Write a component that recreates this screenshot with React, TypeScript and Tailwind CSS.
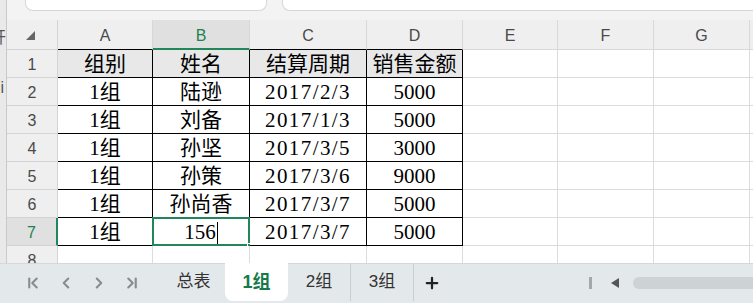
import { ChevronFirst, ChevronLast, ChevronLeft, ChevronRight, Plus } from "lucide-react";
import clsx from "clsx";

const cols = [
  { k: "A", w: "w-[95px]" },
  { k: "B", w: "w-[97px]" },
  { k: "C", w: "w-[117px]" },
  { k: "D", w: "w-[96px]" },
  { k: "E", w: "w-[95px]" },
  { k: "F", w: "w-[96px]" },
  { k: "G", w: "w-[96px]" },
  { k: "H", w: "w-[100px]" },
];

const rows = [
  ["组别", "姓名", "结算周期", "销售金额"],
  ["1组", "陆逊", "2017/2/3", "5000"],
  ["1组", "刘备", "2017/1/3", "5000"],
  ["1组", "孙坚", "2017/3/5", "3000"],
  ["1组", "孙策", "2017/3/6", "9000"],
  ["1组", "孙尚香", "2017/3/7", "5000"],
  ["1组", "156", "2017/3/7", "5000"],
];

const sheets = ["总表", "1组", "2组", "3组"];

const serif = "font-['Liberation_Serif','Noto_Sans_CJK_SC',serif]";
const sans = "font-['Liberation_Sans','Noto_Sans_CJK_SC',sans-serif]";

function HeaderRow() {
  return (
    <div className="flex h-[30px] shrink-0">
      <div className="flex w-[51px] shrink-0 items-center justify-center border-r border-b border-[#d4d4d4] bg-[#efefef]">
        <svg width="9" height="9" viewBox="0 0 9 9" className="mt-[2px] ml-[-4px]">
          <polygon points="9,0 9,9 0,9" fill="#666" />
        </svg>
      </div>
      {cols.map((c, i) => (
        <div
          key={c.k}
          className={clsx(
            "flex shrink-0 items-center justify-center border-r border-[#d8d8d8] pt-[3px] text-[16px]",
            c.w,
            i === 1
              ? "border-b-2 border-b-[#21875a] bg-[#e0e0e0] text-[#1d8152]"
              : "border-b bg-[#efefef] text-[#4a4a4a]",
            i < 4 && i !== 1 && "border-b-black"
          )}
        >
          {c.k}
        </div>
      ))}
    </div>
  );
}

function DataRow({ n, cells }: { n: number; cells: string[] }) {
  const sel = n === 7;
  return (
    <div className="flex h-[28px] shrink-0">
      <div
        className={clsx(
          "flex w-[51px] shrink-0 items-center justify-center border-b border-[#d4d4d4] pt-[2px] text-[16px]",
          sel ? "border-r-2 border-r-[#21875a] bg-[#e0e0e0] text-[#1d8152]" : "border-r bg-[#efefef] text-[#4a4a4a]"
        )}
      >
        {n}
      </div>
      {cols.map((c, i) => {
        const inTable = i < 4 && cells.length > 0;
        return (
          <div
            key={c.k}
            className={clsx(
              "relative flex shrink-0 items-center justify-center border-r border-b pt-[2px] text-[21px] leading-none text-black",
              serif,
              c.w,
              inTable ? "border-black" : "border-[#dcdcdc]",
              inTable && n === 1 ? "bg-[#e8e8e8]" : "bg-white",
              i === 2 && n > 1 && "tracking-[1.4px]"
            )}
          >
            {inTable ? cells[i] : ""}
            {sel && i === 1 && (
              <>
                <span className="ml-[1px] h-[22px] w-[1px] bg-black" />
                <div className="absolute top-[-1px] left-[-1px] right-[-1px] bottom-[-1px] border-2 border-[#21875a]" />
                <div className="absolute right-[-3px] bottom-[-3px] h-[5px] w-[5px] border border-white bg-[#21875a]" />
              </>
            )}
          </div>
        );
      })}
    </div>
  );
}

export default function App() {
  return (
    <div className={clsx("flex h-[303px] w-[753px] flex-col overflow-hidden bg-[#f3f3f3]", sans)}>
      <div className="flex min-h-0 flex-1">
        {/* clipped neighbour panel */}
        <div className="flex w-[7px] shrink-0 flex-col overflow-hidden border-r border-[#c9c9c9] bg-[#e9e9e9] text-[16px] text-[#555]">
          <div className="mt-[26px] flex justify-end whitespace-nowrap">开</div>
          <div className="mt-[26px] flex justify-end pr-[2px] whitespace-nowrap">i</div>
        </div>

        <div className="flex min-w-0 flex-1 flex-col">
          <div className="flex h-[20px] shrink-0 gap-[15px] pl-[18px]">
            <div className="h-[11px] w-[242px] rounded-b-[8px] border border-t-0 border-[#d6d6d6] bg-white" />
            <div className="h-[11px] flex-1 rounded-bl-[8px] border-b border-l border-[#d6d6d6] bg-white" />
          </div>

          <div className="flex min-h-0 flex-1 flex-col overflow-hidden">
            <HeaderRow />
            {rows.map((r, i) => (
              <DataRow key={i} n={i + 1} cells={r} />
            ))}
            <DataRow n={8} cells={[]} />
          </div>
        </div>
      </div>

      {/* sheet tabs */}
      <div className="flex h-[40px] shrink-0 items-start border-t border-[#d3d9db] bg-[#e3e9eb]">
        <div className="flex h-[38px] w-[162px] shrink-0 items-center gap-[15px] pl-[24px] text-[#868c90]">
          <ChevronFirst size={18} strokeWidth={2.8} />
          <ChevronLeft size={18} strokeWidth={2.8} />
          <ChevronRight size={18} strokeWidth={2.8} />
          <ChevronLast size={18} strokeWidth={2.8} />
        </div>
        {sheets.map((s, i) => (
          <div
            key={s}
            className={clsx(
              "mt-[-1px] flex h-[38px] w-[63px] shrink-0 items-center justify-center text-[17px]",
              i === 1 ? "rounded-b-[8px] bg-white text-[18px] font-bold text-[#177a4b]" : "text-[#333]",
              (i === 2 || i === 3) && "border-r border-[#c9cfd1]"
            )}
          >
            {s}
          </div>
        ))}
        <div className="flex h-[38px] w-[36px] items-center justify-center text-[#222]">
          <Plus size={18} strokeWidth={3} />
        </div>
        <div className="ml-auto flex h-[38px] items-center">
          <div className="h-[12px] w-[3px] bg-[#a3a8aa]" />
          <svg width="8" height="10" viewBox="0 0 8 10" className="ml-[19px]">
            <polygon points="8,0 8,10 0,5" fill="#555" />
          </svg>
          <div className="ml-[14px] h-[12px] w-[120px] rounded-l-full bg-[#cdd3d5]" />
        </div>
      </div>
    </div>
  );
}
